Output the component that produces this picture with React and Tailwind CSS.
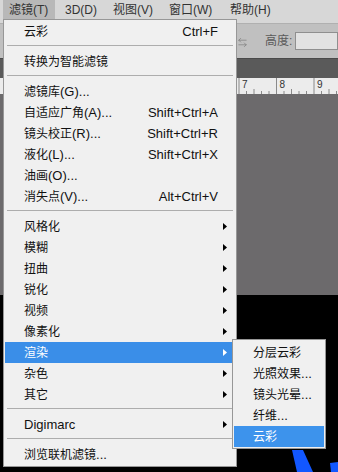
import { ArrowLeftRight } from 'lucide-react';

const CJK = /([\u4e00-\u9fff]+)/;

// CJK runs are drawn a bit smaller than the latin text, like the original menu font
const Txt = ({ t }) =>
  t.split(CJK).map((s, i) =>
    CJK.test(s) ? (
      <span key={i} className="text-[12px]">
        {s}
      </span>
    ) : (
      s
    )
  );

const menu = [
  { label: '云彩', key: 'Ctrl+F' },
  'sep',
  { label: '转换为智能滤镜' },
  'sep',
  { label: '滤镜库(G)...' },
  { label: '自适应广角(A)...', key: 'Shift+Ctrl+A' },
  { label: '镜头校正(R)...', key: 'Shift+Ctrl+R' },
  { label: '液化(L)...', key: 'Shift+Ctrl+X' },
  { label: '油画(O)...' },
  { label: '消失点(V)...', key: 'Alt+Ctrl+V' },
  'sep',
  { label: '风格化', sub: true },
  { label: '模糊', sub: true },
  { label: '扭曲', sub: true },
  { label: '锐化', sub: true },
  { label: '视频', sub: true },
  { label: '像素化', sub: true },
  { label: '渲染', sub: true, active: true },
  { label: '杂色', sub: true },
  { label: '其它', sub: true },
  'sep',
  { label: 'Digimarc', sub: true },
  'sep',
  { label: '浏览联机滤镜...' },
];

const subMenu = ['分层云彩', '光照效果...', '镜头光晕...', '纤维...', '云彩'];

const Arrow = ({ white }) => (
  <svg width="4" height="7" viewBox="0 0 4 7">
    <polygon points="0,0 4,3.5 0,7" fill={white ? '#ffffff' : '#000000'} />
  </svg>
);

const MenuRow = ({ item }) => (
  <div
    className={`flex items-center h-[21px] mx-px pl-[19px] pr-[8px] leading-none ${
      item.active ? 'bg-[#3a8ee8] text-white' : 'text-[#111]'
    }`}
  >
    <span className="flex-1 whitespace-nowrap">
      <Txt t={item.label} />
    </span>
    {item.key && <span className="whitespace-nowrap">{item.key}</span>}
    <span className="w-[9px] flex justify-end">{item.sub && <Arrow white={item.active} />}</span>
  </div>
);

const Separator = () => (
  <div className="h-[9px] pt-[3px] mx-[3px]">
    <div className="h-px bg-[#adadad]" />
  </div>
);

export default function App() {
  return (
    <div className="relative w-[338px] h-[472px] overflow-hidden bg-black font-['Liberation_Sans','Noto_Sans_CJK_SC',sans-serif] text-[13px]">
      {/* menu bar */}
      <div className="h-[23px] bg-[#d7d7d7] flex items-start text-[12px] text-[#333] leading-none">
        <div className="ml-[3px] w-[52px] h-[19px] bg-[#b8b8b8] flex items-center pl-[6px]">
          <Txt t="滤镜(T)" />
        </div>
        <div className="ml-[10px] w-[48px] h-[19px] flex items-center">3D(D)</div>
        <div className="w-[56px] h-[19px] flex items-center">
          <Txt t="视图(V)" />
        </div>
        <div className="w-[61px] h-[19px] flex items-center">
          <Txt t="窗口(W)" />
        </div>
        <div className="h-[19px] flex items-center">
          <Txt t="帮助(H)" />
        </div>
      </div>

      {/* options bar */}
      <div className="h-[35px] bg-[#c0c0c0] border-t border-[#b0b0b0] flex items-center pl-[237px] text-[#5a5a5a]">
        <ArrowLeftRight size={11} strokeWidth={1.5} className="text-[#7a7a7a] mt-[2px]" />
        <span className="ml-[17px] text-[12px] leading-none">高度:</span>
        <div className="ml-[3px] flex-1 h-[18px] bg-[#e2e2e2] border border-[#8f8f8f]" />
      </div>

      {/* document tab strip */}
      <div className="h-[20px] bg-[#5a5a5a] border-t border-[#4a4a4a]" />

      {/* ruler */}
      <div className="h-[16px] bg-[#ececec] pl-[237px]">
        <svg width="101" height="16" viewBox="0 0 101 16">
          {[2, 39.5, 77].map((x, i) => (
            <g key={x}>
              <line x1={x} y1="0" x2={x} y2="16" stroke="#8a8a8a" strokeWidth="1" />
              <text x={x + 3} y="10" fontSize="10" fill="#333" fontFamily="Liberation Sans, sans-serif">
                {7 + i}
              </text>
              {[1, 2, 3, 4].map((j) => (
                <line
                  key={j}
                  x1={x + j * 7.5}
                  y1={j === 2 ? 11 : 13}
                  x2={x + j * 7.5}
                  y2="16"
                  stroke="#8a8a8a"
                  strokeWidth="1"
                />
              ))}
            </g>
          ))}
        </svg>
      </div>

      {/* canvas */}
      <div className="h-[201px] bg-[#6c6a6c]" />

      {/* dark document area */}
      <div className="h-[177px] bg-black">
        <svg width="338" height="177" viewBox="0 0 338 177">
          <polygon points="292,155 303,155 313,177 297,177" fill="#1257ff" />
          <polygon points="330,168 338,167 338,177 331,177" fill="#1257ff" />
        </svg>
      </div>

      {/* filter menu */}
      <div className="absolute left-[3px] top-[19px] w-[234px] bg-[#f0f0f0] border border-[#979797] py-px">
        {menu.map((item, i) => (item === 'sep' ? <Separator key={i} /> : <MenuRow key={i} item={item} />))}
      </div>

      {/* render submenu */}
      <div className="absolute left-[232px] top-[339px] w-[94px] bg-[#f0f0f0] border border-[#979797] pt-[2px] pb-px">
        {subMenu.map((label, i) => (
          <div
            key={label + i}
            className={`h-[21px] mx-px pl-[19px] flex items-center leading-none whitespace-nowrap ${
              i === subMenu.length - 1 ? 'bg-[#3d93ec] text-white' : 'text-[#111]'
            }`}
          >
            <Txt t={label} />
          </div>
        ))}
      </div>
    </div>
  );
}
